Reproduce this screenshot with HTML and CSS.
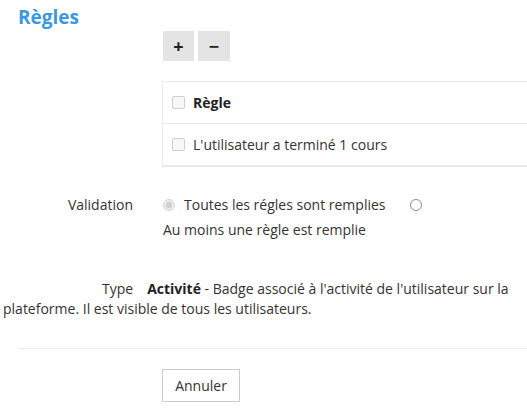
FILE: index.html
```html
<!DOCTYPE html>
<html lang="fr">
<head>
<meta charset="utf-8">
<title>Règles</title>
<link rel="stylesheet" href="styles.css">
</head>
<body>
<main class="page">
  <h3 class="section-title">Règles</h3>
  <div class="btn-row">
    <button class="btn-sq" type="button">+</button>
    <button class="btn-sq" type="button">−</button>
  </div>
  <div class="rules-table">
    <div class="rule-row rule-head"><span class="cb"></span><strong>Règle</strong></div>
    <div class="rule-row"><span class="cb"></span><span>L'utilisateur a terminé 1 cours</span></div>
  </div>
  <div class="form-row">
    <div class="form-label">Validation</div>
    <div class="form-field">
      <span class="radio radio-on"></span><span class="opt">Toutes les régles sont remplies</span><span class="radio"></span> <span class="opt2">Au moins une règle est remplie</span>
    </div>
  </div>
  <p class="type-line"><span class="type-label">Type</span><strong>Activité</strong> - Badge associé à l'activité de l'utilisateur sur la plateforme. Il est visible de tous les utilisateurs.</p>
  <hr class="sep">
  <div class="actions">
    <button class="btn" type="button">Annuler</button>
  </div>
</main>
</body>
</html>
```

FILE: styles.css
```css
html, body {
  margin: 0;
  padding: 0;
  background: #fff;
  overflow: hidden;
}
body {
  font-family: "Open Sans", "Liberation Sans", sans-serif;
  font-size: 14px;
  color: #333;
  width: 527px;
  height: 417px;
}
.page {
  padding-top: 4px;
}
.section-title {
  margin: 0 0 0 18px;
  font-size: 19px;
  line-height: 26px;
  font-weight: 700;
  color: #3c98df;
}
.btn-row {
  display: flex;
  gap: 4px;
  margin: 1px 0 0 163px;
}
.btn-sq {
  width: 31px;
  height: 30px;
  border: 0;
  padding: 0;
  background: #e4e4e4;
  font-family: "Open Sans", "Liberation Sans", sans-serif;
  font-size: 18px;
  font-weight: 700;
  color: #222;
  line-height: 30px;
}
.btn-sq + .btn-sq {
  width: 32px;
}
.rules-table {
  margin: 20px 0 0 162px;
  width: 365px;
  border-top: 1px solid #e8ebee;
  border-left: 1px solid #e8ebee;
  border-bottom: 2px solid #e8ebee;
}
.rule-row {
  display: flex;
  align-items: center;
  height: 41px;
  padding-left: 9px;
}
.rule-row + .rule-row {
  border-top: 1px solid #e8ebee;
}
.rule-head strong {
  color: #222;
}
.cb {
  width: 11px;
  height: 11px;
  border: 1px solid #cfcfcf;
  border-radius: 2px;
  background: #f7f7f7;
  margin-right: 8px;
  flex: none;
}
.form-row {
  display: flex;
  margin-top: 25px;
}
.form-label {
  width: 133px;
  flex: none;
  text-align: right;
  line-height: 25px;
}
.form-field {
  margin-left: 30px;
  line-height: 25px;
  width: 364px;
}
.radio {
  display: inline-block;
  width: 10px;
  height: 10px;
  border: 1px solid #8a8a8a;
  border-radius: 50%;
  background: #fff;
  vertical-align: -1px;
  margin-right: 0;
}
.radio-on {
  border-color: #d4d4d4;
  background: radial-gradient(circle, #d0d0d0 0 3px, #ececec 3.5px);
  margin-right: 9px;
}
.opt {
  margin-right: 24px;
}
.opt2 {
  display: inline-block;
}
.type-line {
  margin: 37px 0 0 3px;
  line-height: 20px;
  text-indent: 99px;
}
.type-label {
  margin-right: 14px;
}
.type-line strong {
  color: #222;
}
.sep {
  margin: 29px 0 0 18px;
  border: 0;
  border-top: 1px solid #ececec;
  height: 0;
}
.actions {
  margin: 20px 0 0 162px;
}
.btn {
  height: 33px;
  width: 78px;
  padding: 0;
  border: 1px solid #cccccc;
  background: #fff;
  font-family: "Open Sans", "Liberation Sans", sans-serif;
  font-size: 14px;
  color: #333;
}
```
